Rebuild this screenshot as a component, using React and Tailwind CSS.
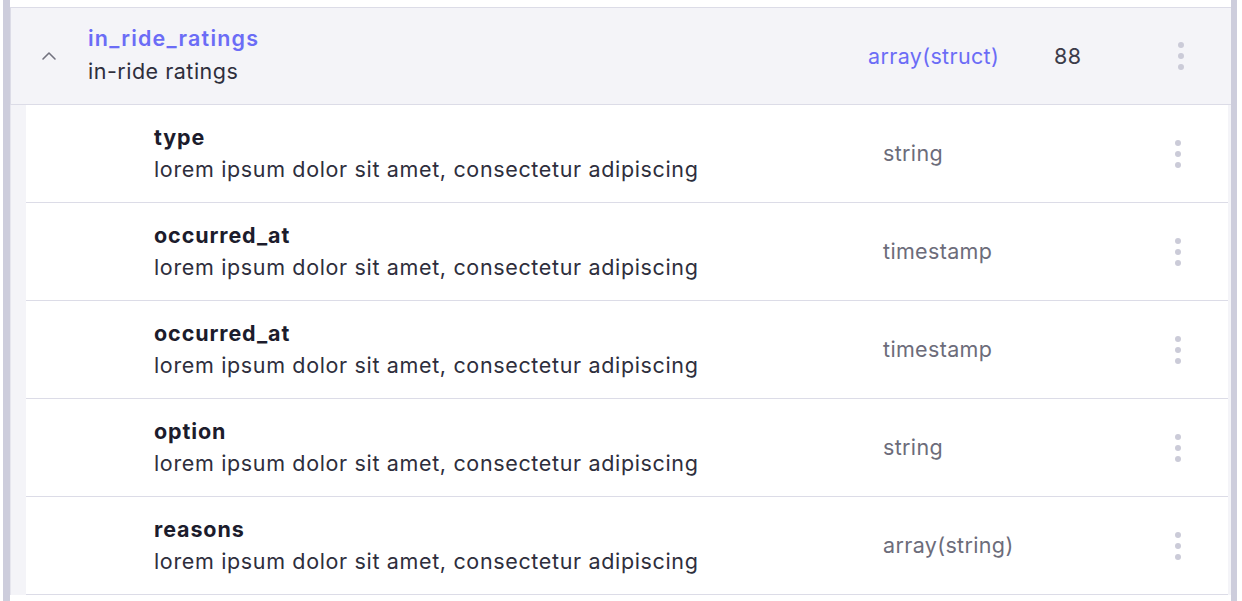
const fields = [
  { name: 'type', type: 'string' },
  { name: 'occurred_at', type: 'timestamp' },
  { name: 'occurred_at', type: 'timestamp' },
  { name: 'option', type: 'string' },
  { name: 'reasons', type: 'array(string)' },
];

const desc = 'lorem ipsum dolor sit amet, consectetur adipiscing';

const Kebab = () => (
  <div className="flex w-6 flex-col items-center gap-[5px]">
    <span className="h-[6px] w-[6px] rounded-full bg-[#cbcbd8]" />
    <span className="h-[6px] w-[6px] rounded-full bg-[#cbcbd8]" />
    <span className="h-[6px] w-[6px] rounded-full bg-[#cbcbd8]" />
  </div>
);

const App = () => {
  return (
    <div
      className="flex h-[601px] w-[1242px] overflow-hidden bg-white pl-[3px] text-[21.5px] tracking-[0.35px]"
      style={{ fontFamily: 'Inter, "Open Sans", sans-serif' }}
    >
      {/* Left rail */}
      <div className="w-[7px] shrink-0 bg-[#cdcddc]" />

      <div className="flex w-[1221px] shrink-0 flex-col pt-[7px]">
        {/* Parent field */}
        <div className="flex h-[98px] shrink-0 items-center border-y border-l border-[#dcdce7] bg-[#f4f4f8]">
          <div className="flex w-[77px] shrink-0 pl-[30px]">
            <svg width="16" height="10" viewBox="0 0 16 10" fill="none">
              <polyline points="2,8 8,2 14,8" stroke="#72727f" strokeWidth="1.6" strokeLinecap="round" strokeLinejoin="round" />
            </svg>
          </div>
          <div className="-mt-[3px] flex w-[780px] shrink-0 flex-col gap-[5px]">
            <span className="leading-[28px] font-semibold tracking-[1.2px] text-[#6b6cf6]">in_ride_ratings</span>
            <span className="leading-[28px] tracking-[0.5px] text-[#2e2e3c]">in-ride ratings</span>
          </div>
          <span className="w-[186px] shrink-0 text-[#6b6cf6]">array(struct)</span>
          <span className="w-[115px] shrink-0 text-[#3c3c4a]">88</span>
          <Kebab />
        </div>

        {/* Child fields */}
        {fields.map((f, i) => (
          <div key={i} className="flex h-[98px] shrink-0 border-l border-[#e6e6ee] bg-[#f4f4f8]">
            <div className="flex flex-1 pl-[15px]">
              <div className="mr-[3px] flex flex-1 items-center border-b border-[#dcdce7] bg-white pl-[128px]">
                <div className="-mt-[2px] flex w-[729px] shrink-0 flex-col gap-[4px]">
                  <span className="leading-[28px] font-bold tracking-[0.9px] text-[#1c1c2c]">{f.name}</span>
                  <span className="leading-[28px] tracking-[0.65px] text-[#2e2e3c]">{desc}</span>
                </div>
                <span className="w-[283px] shrink-0 text-[#6c6c7a]">{f.type}</span>
                <Kebab />
              </div>
            </div>
          </div>
        ))}
        <div className="flex-1 bg-white" />
      </div>

      {/* Right rail */}
      <div className="w-[6px] shrink-0 bg-[#cdcddc]" />
    </div>
  );
};

export default App;
